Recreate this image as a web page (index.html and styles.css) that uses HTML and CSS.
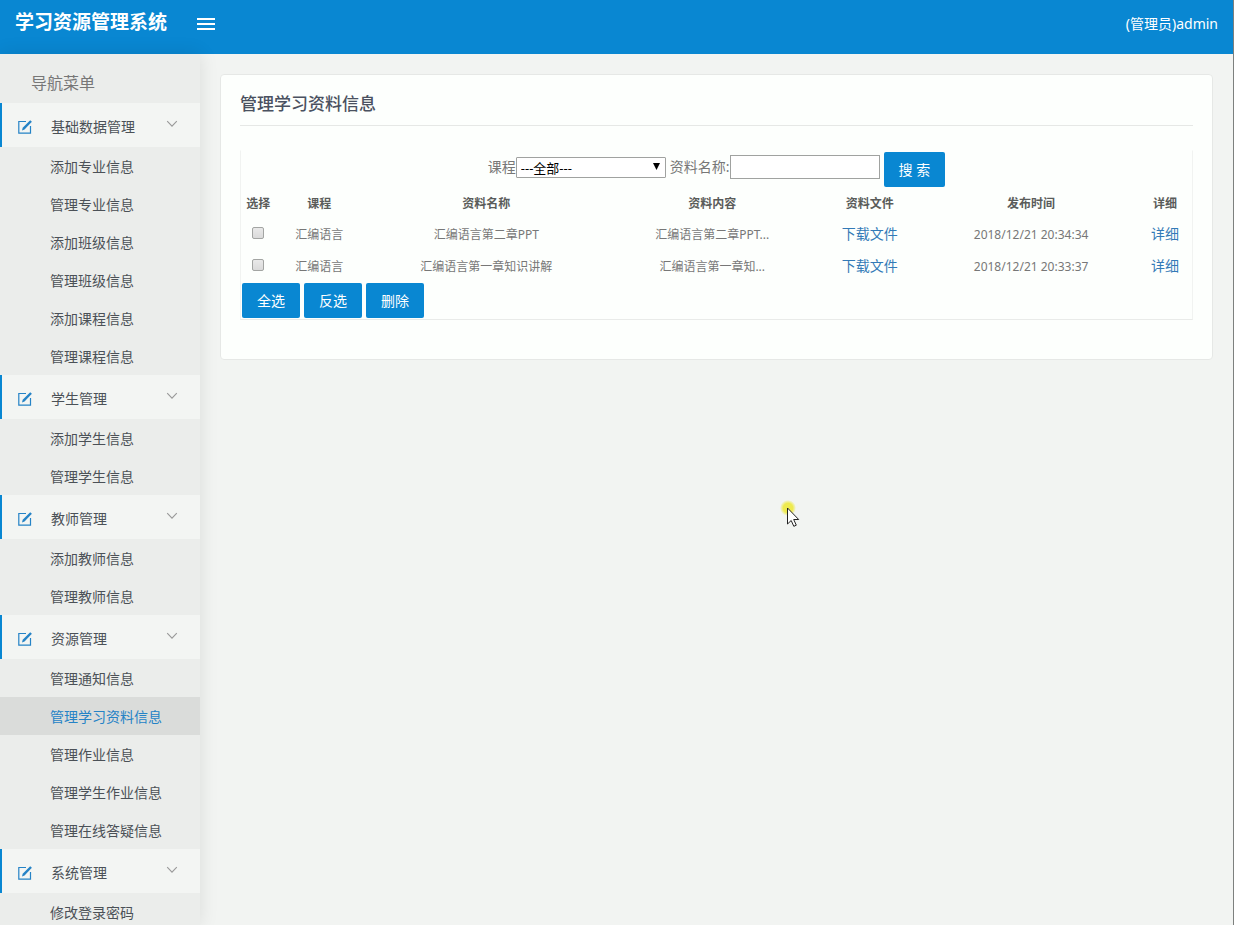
FILE: index.html
```html
<!DOCTYPE html>
<html lang="zh-CN">
<head>
<meta charset="utf-8">
<meta name="viewport" content="width=device-width, initial-scale=1">
<title>学习资源管理系统</title>
<link rel="stylesheet" href="styles.css">
</head>
<body>
<svg class="sprite" aria-hidden="true">
  <symbol id="edit" viewBox="0 0 16 16">
    <path d="M9 2.5H1.8v11.7h11.7V7" fill="none" stroke="currentColor" stroke-width="1.2"/>
    <path d="M13.2 1.2l1.7 1.5-7.4 7.8-2.5.9.7-2.6z" fill="currentColor"/>
  </symbol>
  <symbol id="chevron" viewBox="0 0 12 8">
    <path d="M1.2 1.2L6 6.2l4.8-5" fill="none" stroke="currentColor" stroke-width="1.1"/>
  </symbol>
</svg>

<header class="topbar">
  <h1 class="brand">学习资源管理系统</h1>
  <button class="menu-toggle" type="button" aria-label="切换菜单">
    <svg width="18" height="14" viewBox="0 0 18 14" aria-hidden="true"><path d="M0 2h18M0 7h18M0 12h18" stroke="currentColor" stroke-width="2"/></svg>
  </button>
  <span class="user">(管理员)admin</span>
</header>

<div class="shell">
  <nav class="sidebar" aria-label="导航菜单">
    <h2 class="sidebar-title">导航菜单</h2>

    <button class="group" type="button"><svg class="group-icon"><use href="#edit"/></svg><span class="group-name">基础数据管理</span><svg class="group-arrow"><use href="#chevron"/></svg></button>
    <ul class="items">
      <li><a class="item" href="#">添加专业信息</a></li>
      <li><a class="item" href="#">管理专业信息</a></li>
      <li><a class="item" href="#">添加班级信息</a></li>
      <li><a class="item" href="#">管理班级信息</a></li>
      <li><a class="item" href="#">添加课程信息</a></li>
      <li><a class="item" href="#">管理课程信息</a></li>
    </ul>

    <button class="group" type="button"><svg class="group-icon"><use href="#edit"/></svg><span class="group-name">学生管理</span><svg class="group-arrow"><use href="#chevron"/></svg></button>
    <ul class="items">
      <li><a class="item" href="#">添加学生信息</a></li>
      <li><a class="item" href="#">管理学生信息</a></li>
    </ul>

    <button class="group" type="button"><svg class="group-icon"><use href="#edit"/></svg><span class="group-name">教师管理</span><svg class="group-arrow"><use href="#chevron"/></svg></button>
    <ul class="items">
      <li><a class="item" href="#">添加教师信息</a></li>
      <li><a class="item" href="#">管理教师信息</a></li>
    </ul>

    <button class="group" type="button"><svg class="group-icon"><use href="#edit"/></svg><span class="group-name">资源管理</span><svg class="group-arrow"><use href="#chevron"/></svg></button>
    <ul class="items">
      <li><a class="item" href="#">管理通知信息</a></li>
      <li><a class="item active" href="#">管理学习资料信息</a></li>
      <li><a class="item" href="#">管理作业信息</a></li>
      <li><a class="item" href="#">管理学生作业信息</a></li>
      <li><a class="item" href="#">管理在线答疑信息</a></li>
    </ul>

    <button class="group" type="button"><svg class="group-icon"><use href="#edit"/></svg><span class="group-name">系统管理</span><svg class="group-arrow"><use href="#chevron"/></svg></button>
    <ul class="items">
      <li><a class="item" href="#">修改登录密码</a></li>
    </ul>
  </nav>

  <main class="content">
    <section class="card">
      <h2 class="card-title">管理学习资料信息</h2>
      <div class="panel">
        <form class="search">
          <div class="field">
            <label for="course">课程</label>
            <span class="select-box">
              <select id="course"><option>---全部---</option></select>
              <svg class="select-arrow" viewBox="0 0 7 7" aria-hidden="true"><path d="M0 0h7L3.5 7z"/></svg>
            </span>
          </div>
          <div class="field">
            <label for="name">资料名称:</label>
            <input class="text" id="name" type="text">
          </div>
          <button class="btn btn-search" type="button">搜 索</button>
        </form>

        <table class="grid">
          <colgroup><col class="c-pick"><col class="c-course"><col class="c-name"><col class="c-body"><col class="c-file"><col class="c-time"><col class="c-more"></colgroup>
          <thead>
            <tr><th>选择</th><th>课程</th><th>资料名称</th><th>资料内容</th><th>资料文件</th><th>发布时间</th><th>详细</th></tr>
          </thead>
          <tbody>
            <tr>
              <td><input class="check" type="checkbox" aria-label="选择 汇编语言第二章PPT"></td>
              <td>汇编语言</td><td>汇编语言第二章PPT</td><td>汇编语言第二章PPT...</td>
              <td><a class="link" href="#">下载文件</a></td><td>2018/12/21 20:34:34</td><td><a class="link" href="#">详细</a></td>
            </tr>
            <tr>
              <td><input class="check" type="checkbox" aria-label="选择 汇编语言第一章知识讲解"></td>
              <td>汇编语言</td><td>汇编语言第一章知识讲解</td><td>汇编语言第一章知...</td>
              <td><a class="link" href="#">下载文件</a></td><td>2018/12/21 20:33:37</td><td><a class="link" href="#">详细</a></td>
            </tr>
          </tbody>
        </table>

        <div class="actions">
          <button class="btn" type="button">全选</button>
          <button class="btn" type="button">反选</button>
          <button class="btn" type="button">删除</button>
        </div>
      </div>
    </section>
  </main>
</div>

<svg class="pointer" width="22" height="28" viewBox="0 0 22 28" aria-hidden="true">
  <defs>
    <radialGradient id="glow"><stop offset="0.6" stop-color="#eeea50"/><stop offset="1" stop-color="#eeea50" stop-opacity="0"/></radialGradient>
  </defs>
  <circle cx="8" cy="8" r="8" fill="url(#glow)"/>
  <path d="M7.5 8v16l3.7-3.5 2.6 5.8 2.5-1.1-2.6-5.7h5z" fill="#fff" stroke="#222" stroke-width="1"/>
</svg>
</body>
</html>
```
FILE: styles.css
```css
* {
  box-sizing: border-box;
}

body {
  display: flex;
  flex-direction: column;
  height: 100vh;
  margin: 0;
  overflow: hidden;
  border-right: 1px solid #7d807e;
  background: #f2f4f2;
  color: #777;
  font: 14px/20px "Noto Sans", "Noto Sans CJK SC", sans-serif;
}

button,
input,
select {
  font: inherit;
}

h1,
h2,
ul {
  margin: 0;
  padding: 0;
}

a {
  text-decoration: none;
}

.sprite {
  display: none;
}

.topbar {
  display: flex;
  flex: none;
  align-items: center;
  height: 54px;
  padding: 0 15px 6px;
  background: #0987d2;
  color: #fff;
}

.brand {
  padding-bottom: 4px;
  font-size: 19px;
  line-height: 28px;
}

.menu-toggle {
  display: flex;
  margin-left: 30px;
  padding: 0;
  border: 0;
  background: none;
  color: #fff;
}

.user {
  margin-left: auto;
}

.shell {
  display: flex;
  flex: 1;
  min-height: 0;
}

.sidebar {
  flex: none;
  width: 200px;
  overflow-y: auto;
  scrollbar-width: none;
  background: #ebedeb;
  box-shadow: 0 0 18px rgba(0, 0, 0, 0.1);
}

.sidebar-title {
  height: 49px;
  padding-left: 31px;
  color: #777;
  font-size: 16px;
  font-weight: 400;
  line-height: 58px;
}

.group {
  display: flex;
  align-items: center;
  width: 100%;
  height: 44px;
  padding: 3px 22px 0 15px;
  border: 0;
  border-left: 2px solid #0987d2;
  background: #f3f5f3;
  color: #4b5157;
  text-align: left;
}

.group-icon {
  width: 16px;
  height: 16px;
  margin-right: 18px;
  color: #2583c6;
}

.group-name {
  flex: 1;
}

.group-arrow {
  width: 12px;
  height: 8px;
  margin-bottom: 5px;
  color: #999;
}

.items {
  list-style: none;
}

.item {
  display: block;
  padding: 10px 0 8px 50px;
  color: #4b5157;
}

.item.active {
  background: #dadcda;
  color: #2583c6;
}

.content {
  flex: 1;
  min-width: 0;
  padding: 20px;
}

.card {
  padding: 16px 19px 39px;
  border: 1px solid #e6e8e6;
  border-radius: 4px;
  background: #fdfffd;
}

.card-title {
  padding-bottom: 9px;
  border-bottom: 1px solid #e6e8e6;
  color: #4a5160;
  font-size: 17px;
  font-weight: 500;
  line-height: 25px;
}

.panel {
  margin-top: 24px;
  padding: 1px;
  border: 1px solid #f1f3f1;
  border-top-color: transparent;
  border-bottom-color: #e9ebe9;
}

.search {
  display: flex;
  align-items: center;
  justify-content: center;
  gap: 4px;
}

.field {
  display: flex;
  align-items: center;
  padding-bottom: 5px;
}

.select-box {
  position: relative;
  display: flex;
}

select {
  appearance: none;
  width: 150px;
  height: 21px;
  padding: 0 4px 2px;
  border: 1px solid #a0a2a0;
  border-radius: 1px;
  background: #fff;
  color: #000;
  font-size: 13px;
}

.select-arrow {
  position: absolute;
  top: 6px;
  right: 6px;
  width: 7px;
  height: 7px;
  pointer-events: none;
}

.text {
  width: 150px;
  height: 24px;
  border: 1px solid #a0a2a0;
  background: #fff;
}

.btn {
  height: 35px;
  padding: 0 15px;
  border: 0;
  border-radius: 2px;
  background: #0987d2;
  color: #fff;
}

.grid {
  width: 100%;
  border-collapse: collapse;
  table-layout: fixed;
  font-size: 12px;
}

.c-pick { width: 3.4%; }
.c-course { width: 9.5%; }
.c-name { width: 25.7%; }
.c-body { width: 21.9%; }
.c-file { width: 11.3%; }
.c-time { width: 22.7%; }
.c-more { width: 5.5%; }

.grid th,
.grid td {
  height: 32px;
  padding: 0;
  text-align: center;
  white-space: nowrap;
}

.grid th {
  padding-top: 1px;
  color: #5a5c5a;
  font-weight: 600;
}

.check {
  appearance: none;
  display: block;
  width: 12px;
  height: 12px;
  margin: 0 auto 4px;
  border: 1px solid #a3a5a3;
  border-radius: 2px;
  background: linear-gradient(#e9e9e9, #dadada);
}

.link {
  color: #337ab7;
  font-size: 14px;
  line-height: 18px;
}

.actions {
  display: flex;
  gap: 4px;
}

.pointer {
  position: absolute;
  top: 500px;
  left: 780px;
  pointer-events: none;
}
```
